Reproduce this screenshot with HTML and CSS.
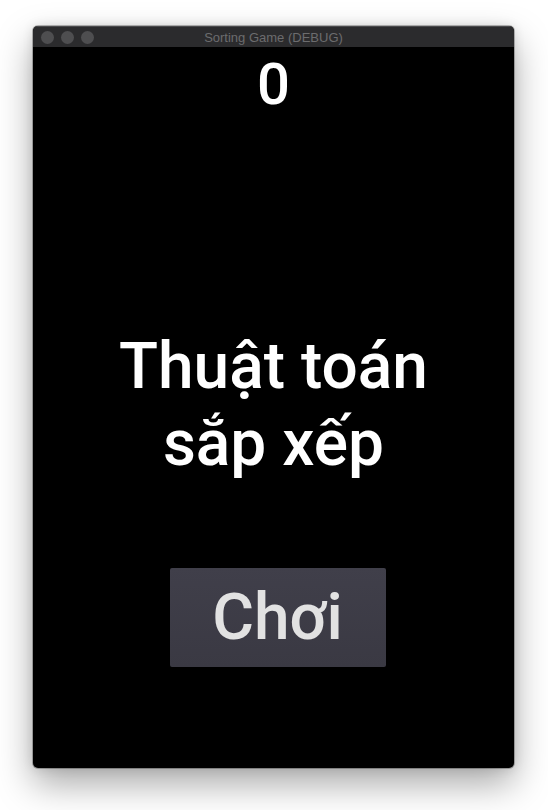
FILE: index.html
```html
<!DOCTYPE html>
<html lang="vi">
<head>
<meta charset="utf-8">
<title>Sorting Game (DEBUG)</title>
<link rel="stylesheet" href="styles.css">
</head>
<body>
<div class="window">
  <div class="titlebar">
    <div class="lights">
      <span class="light"></span>
      <span class="light"></span>
      <span class="light"></span>
    </div>
    <div class="title">Sorting Game (DEBUG)</div>
  </div>
  <div class="content">
    <div class="score">0</div>
    <h1 class="heading">Thuật toán<br>sắp xếp</h1>
    <button class="play">Chơi</button>
  </div>
</div>
</body>
</html>
```

FILE: styles.css
```css
html, body {
  margin: 0;
  padding: 0;
  background: #ffffff;
}
body {
  padding: 26px 0 0 33px;
  min-height: 810px;
  box-sizing: border-box;
  overflow: hidden;
  font-family: Roboto, "Noto Sans", sans-serif;
}
.window {
  width: 481px;
  height: 742px;
  border-radius: 5px;
  overflow: hidden;
  background: #000;
  box-shadow: 0 16px 36px rgba(0,0,0,0.34), 0 0 12px rgba(0,0,0,0.12), 0 0 0 1px rgba(0,0,0,0.25);
  display: flex;
  flex-direction: column;
}
.titlebar {
  height: 21px;
  flex: none;
  background: #2b2b2d;
  border-top: 1px solid #4a4a4c;
  box-sizing: border-box;
  position: relative;
  display: flex;
  align-items: center;
  justify-content: center;
}
.lights {
  position: absolute;
  left: 8px;
  top: 4px;
  display: flex;
  gap: 7px;
}
.light {
  width: 13px;
  height: 13px;
  border-radius: 50%;
  background: #4e4e50;
}
.title {
  font-family: "Liberation Sans", Arial, sans-serif;
  font-size: 13px;
  color: #6c6c6e;
  line-height: 1;
}
.content {
  flex: 1;
  display: flex;
  flex-direction: column;
  align-items: center;
  padding-top: 2px;
  color: #fff;
}
.score {
  font-size: 58px;
  line-height: 70px;
  font-weight: 500;
}
.heading {
  margin: 209px 0 0;
  font-size: 64px;
  line-height: 77px;
  font-weight: 500;
  text-align: center;
}
.play {
  margin: 86px 0 0 8px;
  width: 216px;
  height: 99px;
  border: none;
  border-radius: 2px;
  background: linear-gradient(#403f4a, #3a3943);
  color: #e2e2e2;
  font-family: Roboto, "Noto Sans", sans-serif;
  font-size: 64px;
  font-weight: 500;
  padding: 0;
}
```
